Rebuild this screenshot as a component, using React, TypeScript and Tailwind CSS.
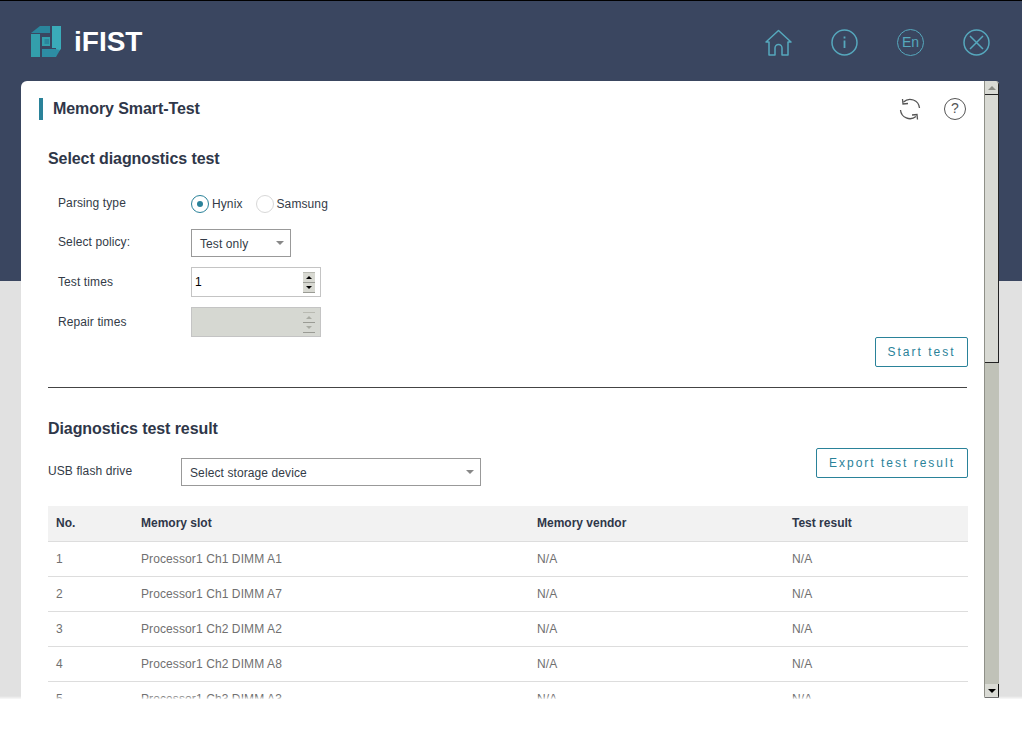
const rows = [
  { no: 1, slot: "Processor1 Ch1 DIMM A1" },
  { no: 2, slot: "Processor1 Ch1 DIMM A7" },
  { no: 3, slot: "Processor1 Ch2 DIMM A2" },
  { no: 4, slot: "Processor1 Ch2 DIMM A8" },
  { no: 5, slot: "Processor1 Ch3 DIMM A3" },
];

function Logo() {
  return (
    <svg width="30" height="31" viewBox="0 0 30 31" className="-mt-[1px]">
      <path d="M0 8 H9 V31 H0 Z" fill="#339fac" />
      <path d="M0 7 L9 0 H19 V7 H9 Z" fill="#2a859c" />
      <path d="M21 0 H30 V23 L25 28 V22 H21 Z" fill="#3aabb9" />
      <path d="M11 31 V23 H24 L29 24 L25 31 Z" fill="#2d8da4" />
      <path d="M11 11 H19 V20 H11 Z" fill="#339fac" />
      <path d="M13.5 13 H18 V18 H13.5 Z" fill="#2a859c" />
    </svg>
  );
}

function Spinner({ disabled }: { disabled?: boolean }) {
  const arrow = disabled ? "#a9aba3" : "#000000";
  return (
    <div className={`flex w-[12px] flex-col ${disabled ? "" : "bg-[#d8d9d2]"}`}>
      <div className="flex h-[10px] items-center justify-center border-t border-[#b9bab2]">
        <div className="h-0 w-0 border-x-[3px] border-b-[3px] border-x-transparent" style={{ borderBottomColor: arrow }} />
      </div>
      <div className="flex h-[11px] items-center justify-center border-y border-[#9a9b94]">
        <div className="h-0 w-0 border-x-[3px] border-t-[3px] border-x-transparent" style={{ borderTopColor: arrow }} />
      </div>
    </div>
  );
}

function Caret() {
  return <div className="h-0 w-0 border-x-[4px] border-t-[4px] border-x-transparent border-t-[#888888]" />;
}

function Scrollbar() {
  return (
    <div className="flex h-[617px] w-[15px] shrink-0 flex-col border-l border-[#8f9088] bg-[#c0c2b8]">
      <div className="flex h-[14px] items-center justify-center rounded-tr-[3px] border-r border-b border-[#222222] bg-[#d9dad4]">
        <div className="h-0 w-0 border-x-[4px] border-b-[4px] border-x-transparent border-b-[#8a8b84]" />
      </div>
      <div className="h-[268px] border-r border-b border-[#222222] bg-[#d9dad4]" />
      <div className="flex-1" />
      <div className="flex h-[14px] items-center justify-center border-r border-b border-[#111111] bg-[#d9dad4]">
        <div className="h-0 w-0 border-x-[4px] border-t-[4px] border-x-transparent border-t-black" />
      </div>
    </div>
  );
}

export default function App() {
  return (
    <div className="h-[729px] w-[1022px] overflow-hidden bg-white font-['Liberation_Sans',Arial,sans-serif]">
      <div className="relative h-[699px] overflow-hidden border-t border-black bg-[linear-gradient(#3a4660_280px,#e1e1e1_280px)]">
        <header className="flex h-[80px] items-start justify-between pl-[31px] pr-[32px] pt-[25px]">
          <div className="flex items-center gap-[13px]">
            <Logo />
            <span className="text-[28px] leading-[32px] font-bold text-white">iFIST</span>
          </div>
          <div className="flex items-center gap-[39px] pt-[3px] text-[#56a8bd]">
            <svg width="27" height="27" viewBox="0 0 27 27" fill="none" stroke="currentColor" strokeWidth="1.5">
              <path d="M1 13 L13.5 1.5 L26 13 H23 V26 H17 V19 a3.5 3.5 0 0 0 -7 0 V26 H4 V13 Z" strokeLinejoin="round" />
            </svg>
            <svg width="27" height="27" viewBox="0 0 27 27" fill="none" stroke="currentColor" strokeWidth="1.5">
              <circle cx="13.5" cy="13.5" r="12.5" />
              <path d="M13.5 11.5 V19 M13.5 7.5 V9.5" strokeWidth="1.8" />
            </svg>
            <div className="flex h-[27px] w-[27px] items-center justify-center rounded-full border-[1.5px] border-[#56a8bd] text-[14px]">En</div>
            <svg width="27" height="27" viewBox="0 0 27 27" fill="none" stroke="currentColor" strokeWidth="1.5">
              <circle cx="13.5" cy="13.5" r="12.5" />
              <path d="M7 7 L20 20 M20 7 L7 20" />
            </svg>
          </div>
        </header>

        <div className="ml-[21px] flex h-[618px] w-[978px] overflow-hidden rounded-tl-[6px] rounded-tr-[4px] bg-white">
          <main className="w-[963px] shrink-0 text-[12px] tracking-[0.1px] text-[#333b47]">
            <div className="flex h-[54px] items-center justify-between pl-[18px] pr-[18px] pt-[1px]">
              <div className="flex items-center">
                <div className="h-[22px] w-[4px] bg-[#2a8299]" />
                <h1 className="ml-[10px] text-[16px] font-bold tracking-[-0.08px] text-[#2f3749]">Memory Smart-Test</h1>
              </div>
              <div className="flex items-center gap-[23px] text-[#555555]">
                <svg width="22" height="22" viewBox="0 0 22 22" fill="none" stroke="currentColor" strokeWidth="1.3">
                  <path d="M4.5 4 A9.5 9.5 0 0 1 20.5 10" />
                  <path d="M1.5 12 A9.5 9.5 0 0 0 17 18.5" />
                  <path d="M3.5 1 L4 6 L9 5.5" />
                  <path d="M18.5 21.5 L18 16.5 L13 17" />
                </svg>
                <div className="flex h-[22px] w-[22px] items-center justify-center rounded-full border border-[#555555] text-[14px]">?</div>
              </div>
            </div>

            <div className="pl-[27px] pr-[16px]">
              <h2 className="mt-[15px] text-[16px] leading-[18px] font-bold tracking-[-0.08px] text-[#2f3749]">Select diagnostics test</h2>

              <div className="mt-[27px] pl-[10px]">
                <div className="flex h-[18px] items-center">
                  <span className="w-[133px] -translate-y-[1px]">Parsing type</span>
                  <span className="flex h-[18px] w-[18px] items-center justify-center rounded-full border border-[#2a8299]">
                    <span className="h-[6px] w-[6px] rounded-full bg-[#2a8299]" />
                  </span>
                  <span className="ml-[3px]">Hynix</span>
                  <span className="ml-[13px] h-[18px] w-[18px] rounded-full border border-[#d8d8d8]" />
                  <span className="ml-[3px]">Samsung</span>
                </div>
                <div className="mt-[16px] flex h-[28px] items-center">
                  <span className="w-[133px] -translate-y-[1px]">Select policy:</span>
                  <div className="flex h-[28px] w-[100px] items-center justify-between border border-[#999999] pl-[8px] pr-[6px]">
                    <span className="translate-y-[1px]">Test only</span>
                    <Caret />
                  </div>
                </div>
                <div className="mt-[10px] flex h-[30px] items-center">
                  <span className="w-[133px]">Test times</span>
                  <div className="flex h-[30px] w-[130px] items-center justify-between border border-[#c4c4c4] pl-[3px] pr-[5px] text-black">
                    <span>1</span>
                    <Spinner />
                  </div>
                </div>
                <div className="mt-[10px] flex h-[30px] items-center">
                  <span className="w-[133px]">Repair times</span>
                  <div className="flex h-[30px] w-[130px] items-center justify-end border border-[#c4c4c4] bg-[#d6d8d2] pr-[5px]">
                    <Spinner disabled />
                  </div>
                </div>
              </div>

              <div className="flex justify-end">
                <button className="h-[30px] w-[93px] rounded-[2px] border border-[#2a8299] text-[12px] tracking-[2px] text-[#2a8299]">Start test</button>
              </div>
              <div className="mt-[20px] mr-[1px] h-px bg-[#444444]" />

              <h2 className="mt-[32px] text-[16px] leading-[18px] font-bold tracking-[-0.08px] text-[#2f3749]">Diagnostics test result</h2>
              <div className="mt-[20px] flex items-start justify-between">
                <div className="flex items-center">
                  <span className="w-[133px] -translate-y-[1px]">USB flash drive</span>
                  <div className="flex h-[28px] w-[300px] items-center justify-between border border-[#999999] pl-[8px] pr-[6px]">
                    <span className="translate-y-[1px]">Select storage device</span>
                    <Caret />
                  </div>
                </div>
                <button className="-mt-[10px] h-[30px] w-[152px] rounded-[2px] border border-[#2a8299] text-[12px] tracking-[2px] text-[#2a8299]">Export test result</button>
              </div>

              <table className="mt-[20px] w-[920px] table-fixed border-collapse text-left">
                <thead>
                  <tr className="h-[35px] border-b border-[#dddddd] bg-[#f2f2f2] tracking-normal text-[#2f3749]">
                    <th className="w-[85px] pl-[8px] font-bold">No.</th>
                    <th className="w-[396px] pl-[8px] font-bold">Memory slot</th>
                    <th className="w-[255px] pl-[8px] font-bold">Memory vendor</th>
                    <th className="pl-[8px] font-bold">Test result</th>
                  </tr>
                </thead>
                <tbody className="text-[#707070]">
                  {rows.map((r) => (
                    <tr key={r.no} className="h-[35px] border-b border-[#dddddd]">
                      <td className="pl-[8px]">{r.no}</td>
                      <td className="pl-[8px]">{r.slot}</td>
                      <td className="pl-[8px]">N/A</td>
                      <td className="pl-[8px]">N/A</td>
                    </tr>
                  ))}
                </tbody>
              </table>
            </div>
          </main>
          <Scrollbar />
        </div>
        <div className="absolute inset-x-0 bottom-0 h-[3px] bg-[linear-gradient(rgba(255,255,255,0),rgba(255,255,255,0.8))]" />
      </div>
    </div>
  );
}
